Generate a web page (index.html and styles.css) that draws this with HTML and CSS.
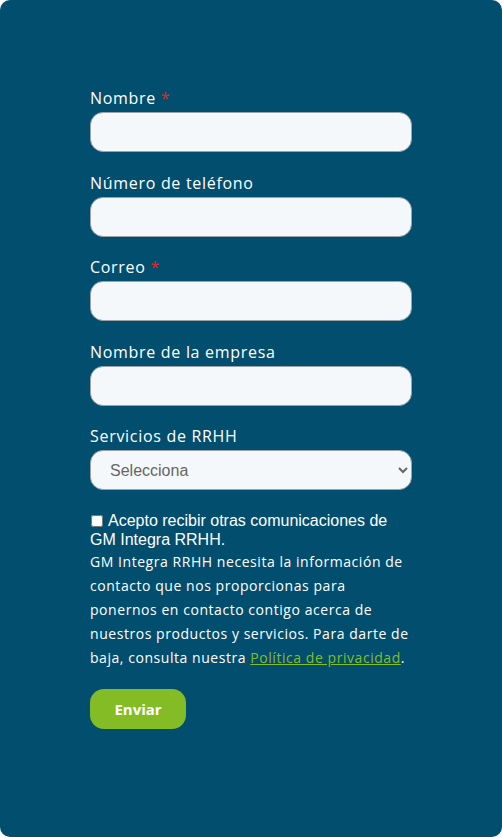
FILE: index.html
```html
<html>
	<head>
		<title>Contacto - GM Integra RRHH</title>
		<link rel="stylesheet" href="styles.css">
	</head>
	<body>
		<div class="card">
			<form class="form">
				<div class="field">
					<label class="label">Nombre <span class="req">*</span></label>
					<input class="input" type="text" />
				</div>
				<div class="field">
					<label class="label">Número de teléfono</label>
					<input class="input" type="tel" />
				</div>
				<div class="field">
					<label class="label">Correo <span class="req">*</span></label>
					<input class="input" type="email" />
				</div>
				<div class="field">
					<label class="label">Nombre de la empresa</label>
					<input class="input" type="text" />
				</div>
				<div class="field">
					<label class="label">Servicios de RRHH</label>
					<select class="input select">
						<option>Selecciona</option>
					</select>
				</div>

				<div class="consent">
					<label class="check"><input type="checkbox" class="box" />Acepto recibir otras comunicaciones de GM Integra RRHH.</label>
					<p class="legal">GM Integra RRHH necesita la información de contacto que nos proporcionas para ponernos en contacto contigo acerca de nuestros productos y servicios. Para darte de baja, consulta nuestra <a href="#" class="link">Política de privacidad</a>.</p>
				</div>

				<button type="button" class="submit">Enviar</button>
			</form>
		</div>
	</body>
</html>
```

FILE: styles.css
```css
body {
	margin: 0;
	background: #ffffff;
}

.card {
	background: #024e6f;
	border-radius: 10px;
	height: 837px;
	box-sizing: border-box;
	padding: 88px 90px 0 90px;
}

.form {
	margin: 0;
	display: flex;
	flex-direction: column;
}

.field {
	display: flex;
	flex-direction: column;
	margin-bottom: 20.5px;
}

.label {
	font-family: "Open Sans", sans-serif;
	font-size: 16px;
	line-height: 20px;
	letter-spacing: 0.7px;
	color: #ffffff;
	margin-bottom: 4px;
}

.req {
	color: #e4261c;
}

.input {
	height: 40px;
	width: 100%;
	box-sizing: border-box;
	border: 1px solid #9aa3a9;
	border-radius: 13px;
	background: #f5f8fa;
	padding: 0 18px;
	font-family: "Liberation Sans", Arial, sans-serif;
	font-size: 16px;
	color: #555;
}

.select {
	color: #666666;
	padding-left: 15px;
}

.consent {
	margin-top: 0;
}

.check {
	display: block;
	font-family: "Liberation Sans", Arial, sans-serif;
	font-size: 16px;
	line-height: 19px;
	color: #ffffff;
}

.box {
	width: 12px;
	height: 12px;
	margin: 0 5px 0 1px;
	vertical-align: -1px;
}

.legal {
	font-family: "Open Sans", sans-serif;
	font-size: 14px;
	line-height: 24px;
	letter-spacing: 0.55px;
	color: #ffffff;
	margin: 1px 0 0 0;
}

.link {
	color: #84bd26;
}

.submit {
	align-self: flex-start;
	margin-top: 19px;
	width: 96px;
	height: 40px;
	border: none;
	border-radius: 14px;
	background: #84bc25;
	color: #ffffff;
	font-family: "Open Sans", sans-serif;
	font-weight: 700;
	font-size: 15px;
}
```
